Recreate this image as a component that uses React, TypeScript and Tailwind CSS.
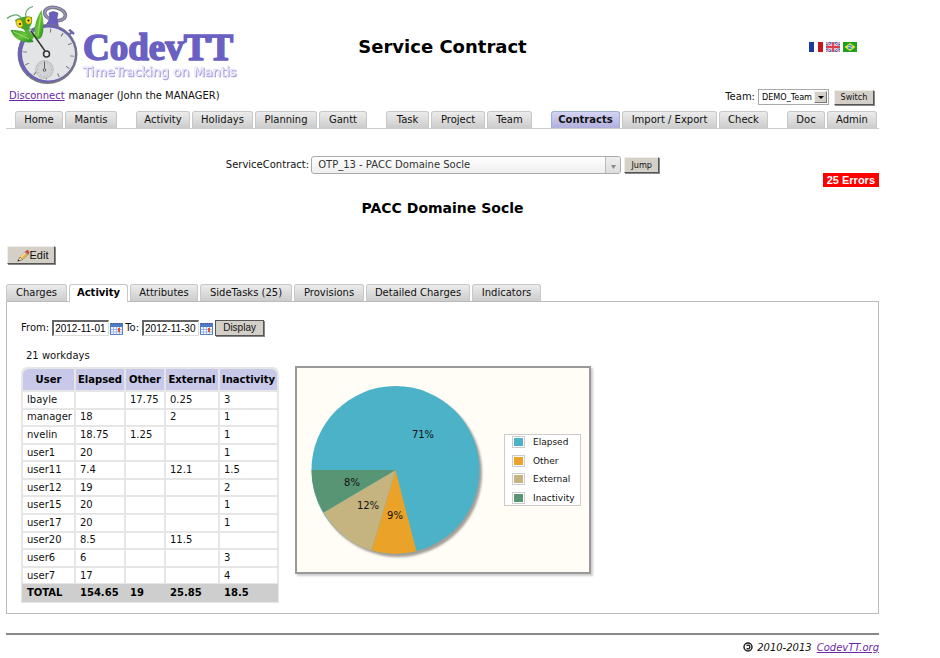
import React from "react";

const rows = [
  ["lbayle", "", "17.75", "0.25", "3"],
  ["manager", "18", "", "2", "1"],
  ["nvelin", "18.75", "1.25", "", "1"],
  ["user1", "20", "", "", "1"],
  ["user11", "7.4", "", "12.1", "1.5"],
  ["user12", "19", "", "", "2"],
  ["user15", "20", "", "", "1"],
  ["user17", "20", "", "", "1"],
  ["user20", "8.5", "", "11.5", ""],
  ["user6", "6", "", "", "3"],
  ["user7", "17", "", "", "4"],
];

const totals = ["TOTAL", "154.65", "19", "25.85", "18.5"];

const columns = [
  { label: "User", style: "w-[51px] rounded-tl-md" },
  { label: "Elapsed", style: "w-[48px]" },
  { label: "Other", style: "w-[38px]" },
  { label: "External", style: "w-[52px]" },
  { label: "Inactivity", style: "w-[57px] rounded-tr-md" },
];

const menu = [
  [
    { label: "Home", width: "w-[48px]" },
    { label: "Mantis", width: "w-[52px]" },
  ],
  [
    { label: "Activity", width: "w-[54px]" },
    { label: "Holidays", width: "w-[61px]" },
    { label: "Planning", width: "w-[62px]" },
    { label: "Gantt", width: "w-[48px]" },
  ],
  [
    { label: "Task", width: "w-[43px]" },
    { label: "Project", width: "w-[54px]" },
    { label: "Team", width: "w-[45px]" },
  ],
  [
    { label: "Contracts", width: "w-[69px]" },
    { label: "Import / Export", width: "w-[95px]" },
    { label: "Check", width: "w-[49px]" },
  ],
  [
    { label: "Doc", width: "w-[38px]" },
    { label: "Admin", width: "w-[50px]" },
  ],
];

const tabs = [
  { label: "Charges", width: "w-[61px]" },
  { label: "Activity", width: "w-[59px]" },
  { label: "Attributes", width: "w-[68px]" },
  { label: "SideTasks (25)", width: "w-[92px]" },
  { label: "Provisions", width: "w-[70px]" },
  { label: "Detailed Charges", width: "w-[104px]" },
  { label: "Indicators", width: "w-[69px]" },
];

const legend = [
  { label: "Elapsed", color: "bg-[#4bb2c8]" },
  { label: "Other", color: "bg-[#eaa228]" },
  { label: "External", color: "bg-[#c5b47f]" },
  { label: "Inactivity", color: "bg-[#579575]" },
];

const tabBase =
  "shrink-0 rounded-t-[3px] border border-b-0 text-center text-[10px] leading-4 whitespace-nowrap";
const tabIdle = "h-[17px] border-[#c8c8c8] bg-linear-to-b from-[#ececec] to-[#cccccc]";
const buttonBase =
  "border border-t-[#f0eee8] border-l-[#f0eee8] border-r-[#555] border-b-[#555] bg-[#d4d0c8] shadow-[1px_1px_0_#888]";
const smallFont = "font-['DejaVu_Sans_Condensed','DejaVu_Sans',sans-serif] text-[9px]";
const arialFont = "font-['Liberation_Sans',Arial,sans-serif]";

function Logo() {
  const ticks = Array.from({ length: 12 }, (_, i) => i * 30);
  return (
    <svg viewBox="6 0 234 86" className="h-[86px] w-[234px]" role="img" aria-label="CodevTT TimeTracking on Mantis">
      <defs>
        <linearGradient id="wing" x1="0" y1="0" x2="1" y2="1">
          <stop offset="0" stopColor="#2f9a2c" />
          <stop offset="0.5" stopColor="#6cc53c" />
          <stop offset="1" stopColor="#1a8420" />
        </linearGradient>
      </defs>
      <ellipse cx="55" cy="14" rx="10.5" ry="6.5" transform="rotate(12 55 14)" fill="none" stroke="#77777f" strokeWidth="3.6" />
      <ellipse cx="55" cy="14" rx="10.5" ry="6.5" transform="rotate(12 55 14)" fill="none" stroke="#9a96c8" strokeWidth="1.4" />
      <path d="M49 13 q4 -3 9 0 l-1 5 l1.5 9 l-12 -3 l3.5 -5 z" fill="#6a5fc0" stroke="#55518a" strokeWidth="0.6" />
      <path d="M68 35 l2.5 -3 l-2 -1.5 l1.5 -1.5 l4.5 4 l-1 1.5 l-2 -1 l-2 3 z" fill="#6a5fc0" stroke="#666" strokeWidth="0.4" />
      <circle cx="47.5" cy="54" r="30" fill="#77777f" />
      <circle cx="47" cy="53.5" r="28.8" fill="#6a62b6" />
      <circle cx="48.5" cy="54" r="26.5" fill="#e2e4e5" />
      {ticks.map((a) => (
        <line key={a} x1="48.5" y1="28.5" x2="48.5" y2="32.5" stroke="#777" strokeWidth="1" transform={`rotate(${a + 5} 48.5 54)`} />
      ))}
      <circle cx="44.5" cy="69.5" r="8.8" fill="#d3d4d5" stroke="#b2b2b4" strokeWidth="0.8" />
      <circle cx="44.5" cy="69.5" r="6.8" fill="none" stroke="#999" strokeWidth="1" strokeDasharray="0.7 2.8" />
      <path d="M44.5 61.5 v7" stroke="#555" strokeWidth="0.9" />
      <circle cx="44.5" cy="70" r="1.3" fill="#ddd" stroke="#555" strokeWidth="1" />
      <path d="M10.5 30 C17 30 27 31 30 35 L33.5 42 C28 43 22 42 17 39 C13 36 12 33 10.5 30 z" fill="url(#wing)" />
      <path d="M35 38 C33 27 37 17 41.5 10 C43.5 20 44.5 29 42 36 C40 40 37 40 35 38 z" fill="url(#wing)" />
      <path d="M13 31.5 L29 39" stroke="#b6e56c" strokeWidth="0.8" />
      <path d="M40.5 15 L38 36" stroke="#b6e56c" strokeWidth="0.8" />
      <path d="M23 27 C29 26 33 29 34.5 36 L32 40 C28 37 25 33 23 27 z" fill="#54b52e" />
      <path d="M15 20 Q24 15 32 17 Q33.5 24 27 30.5 Q18 29 15 20 z" fill="#43a42e" />
      <path d="M22 19 Q17 11 7 18.5 M26 17.5 Q24 9 33 6.5" fill="none" stroke="#5fa56c" strokeWidth="1.2" />
      <ellipse cx="19.5" cy="23.5" rx="3.2" ry="4.2" fill="#f7dc16" stroke="#917b12" strokeWidth="0.6" transform="rotate(-20 19.5 23.5)" />
      <ellipse cx="28.5" cy="20.5" rx="3.2" ry="3.8" fill="#f7dc16" stroke="#917b12" strokeWidth="0.6" />
      <circle cx="20" cy="24" r="1.1" fill="#222" />
      <circle cx="28.5" cy="20.5" r="1.1" fill="#222" />
      <path d="M29.5 29.5 L33 34" stroke="#b9b4e8" strokeWidth="2.5" />
      <path d="M31 31 L45 51" stroke="#333" strokeWidth="1.4" />
      <circle cx="46.5" cy="54" r="3" fill="#e8e8e8" stroke="#333" strokeWidth="1.5" />
      <text x="83" y="60" fontSize="37" fontWeight="700" fill="#6960c2" stroke="#6960c2" strokeWidth="1.6" fontFamily="'Liberation Serif','Times New Roman',serif">CodevTT</text>
      <text
        x="83"
        y="76"
        fontSize="13"
        fill="#ffffff"
        stroke="#d5d1f2"
        strokeWidth="0.4"
        fontFamily="'DejaVu Sans',sans-serif"
        className="[filter:drop-shadow(1px_1px_0_#a49dde)]"
      >
        TimeTracking on Mantis
      </text>
    </svg>
  );
}

function CalendarIcon() {
  return (
    <svg viewBox="0 0 13 13" className="block h-[13px] w-[13px]" aria-hidden="true">
      <rect x="0.5" y="1.5" width="12" height="11" fill="#f2f6ff" stroke="#5b82c8" />
      <rect x="0" y="1" width="13" height="4" fill="#4d7bcc" />
      <path d="M1 1.5 h11" stroke="#556" strokeDasharray="1 1" />
      <path d="M1 7.5 h11 M1 10 h11 M3.5 5 v7 M6.5 5 v7 M9.5 5 v7" stroke="#8facde" strokeWidth="0.8" />
      <rect x="8" y="6" width="2" height="4" fill="#e0502c" />
    </svg>
  );
}

function PencilIcon() {
  return (
    <svg viewBox="0 0 13 13" className="h-[13px] w-[13px]" aria-hidden="true">
      <path d="M1 12 L3 8 L9 2 L12 5 L5.5 10.5 z" fill="#f3b83b" stroke="#8b6a35" strokeWidth="0.5" />
      <path d="M3 8 L8.5 2.5 L9.5 3.5 L4 9 z" fill="#fbe09a" />
      <path d="M8 3 L10 1 Q12 1 12.5 3.5 L10.5 5.5 z" fill="#d9412b" />
      <path d="M7.5 3.5 L8.5 2.5 L11 5 L10 6 z" fill="#8aa0cc" />
      <path d="M1 12 L3 8 L5.5 10.5 z" fill="#f5e6d0" stroke="#555" strokeWidth="0.5" />
      <path d="M0.5 12.5 L1.5 10.5 L2.8 11.6 z" fill="#222" />
    </svg>
  );
}

function Flags() {
  return (
    <div className="flex gap-[3px]">
      <button type="button" aria-label="Français">
        <svg viewBox="0 0 14 10" className="block h-[10px] w-[14px]">
          <rect width="14" height="10" fill="#fff" />
          <rect width="5" height="10" fill="#1a3a9c" />
          <rect x="9" width="5" height="10" fill="#c8161d" />
        </svg>
      </button>
      <button type="button" aria-label="English">
        <svg viewBox="0 0 14 10" className="block h-[10px] w-[14px]">
          <rect width="14" height="10" fill="#5068b4" />
          <path d="M0 0 L14 10 M14 0 L0 10" stroke="#e4e4f2" strokeWidth="2.2" />
          <path d="M0 0 L14 10 M14 0 L0 10" stroke="#d86070" strokeWidth="1" />
          <path d="M7 0 V10 M0 5 H14" stroke="#f6dfe4" strokeWidth="3" />
          <path d="M7 0 V10 M0 5 H14" stroke="#d8404f" strokeWidth="1.8" />
        </svg>
      </button>
      <button type="button" aria-label="Português">
        <svg viewBox="0 0 14 10" className="block h-[10px] w-[14px]">
          <rect width="14" height="10" fill="#1fa01f" />
          <path d="M7 1 L12.5 5 L7 9 L1.5 5 z" fill="#e6e63a" />
          <circle cx="7" cy="5" r="2.3" fill="#3f96b8" />
          <path d="M5 4.5 Q7 4 9 5.8" stroke="#fff" strokeWidth="0.6" fill="none" />
        </svg>
      </button>
    </div>
  );
}

function PieChart() {
  return (
    <div className="flex h-[208px] w-[296px] shrink-0 items-center border-2 border-[#999] bg-[#fffdf6] shadow-[2px_2px_2px_#ccc]">
      <svg viewBox="0 0 200 204" className="h-[204px] w-[200px] shrink-0" role="img" aria-label="Activity share">
        <defs>
          <filter id="pieShade" x="-10%" y="-10%" width="120%" height="120%">
            <feGaussianBlur stdDeviation="1.2" />
          </filter>
        </defs>
        <circle cx="101" cy="105" r="84" fill="#8d8780" opacity="0.8" filter="url(#pieShade)" />
        <circle cx="98.5" cy="102" r="84" fill="#4bb2c8" />
        <path d="M98.5 102 L119.5 183.3 A84 84 0 0 1 74.5 182.5 z" fill="#eaa228" />
        <path d="M98.5 102 L74.5 182.5 A84 84 0 0 1 26.5 144.5 z" fill="#c5b47f" />
        <path d="M98.5 102 L26.5 144.5 A84 84 0 0 1 14.5 102 z" fill="#579575" />
        <g fontSize="10" fontFamily="'DejaVu Sans',sans-serif" textAnchor="middle" fill="#111">
          <text x="126" y="70">71%</text>
          <text x="55" y="118">8%</text>
          <text x="71" y="141">12%</text>
          <text x="98" y="151">9%</text>
        </g>
      </svg>
      <ul className="ml-[7px] flex h-[72px] w-[77px] flex-col justify-between border border-[#ccc] bg-white py-px pl-[7px] text-[9px] leading-3">
        {legend.map((item) => (
          <li key={item.label} className="flex items-center gap-2">
            <span className="border border-[#ccc] p-px">
              <span className={`block h-[8px] w-[9px] ${item.color}`} />
            </span>
            {item.label}
          </li>
        ))}
      </ul>
    </div>
  );
}

function DateField({ id, label, value }: { id: string; label: string; value: string }) {
  return (
    <>
      <label htmlFor={id} className="mr-[3px]">{label}</label>
      <input
        id={id}
        type="text"
        defaultValue={value}
        className={`h-[16px] w-[57px] border border-t-2 border-l-2 border-[#ddd] border-t-[#666] border-l-[#666] bg-white pl-px text-[10px] text-black ${arialFont}`}
      />
      <button type="button" aria-label={`Pick date, ${label}`} className="mr-[2px] ml-px">
        <CalendarIcon />
      </button>
    </>
  );
}

export default function App() {
  return (
    <div className="mr-[61px] ml-[6px] font-['DejaVu_Sans',sans-serif] text-[10px] leading-3 text-[#111]">
      <header>
        <div className="grid grid-cols-[1fr_auto_1fr] items-center">
          <Logo />
          <h1 className="pt-2 text-[18px] leading-6 font-bold text-black">Service Contract</h1>
          <div className="flex justify-end pt-2 pr-[22px]">
            <Flags />
          </div>
        </div>
        <div className="flex h-[20px] items-center justify-between pr-[5px]">
          <p className="pl-[3px]">
            <a href="#disconnect" className="mr-1 text-[#6a2aa8] underline">Disconnect</a>
            manager (John the MANAGER)
          </p>
          <form className="flex items-center pt-[2px]">
            <label htmlFor="team" className="mr-[3px]">Team:</label>
            <div className="relative">
              <select
                id="team"
                className={`block h-[16px] w-[71px] appearance-none border border-[#ccc] border-t-[#444] border-l-[#444] bg-white pl-[3px] text-black outline outline-[#aaa] -outline-offset-1 ${smallFont}`}
              >
                <option>DEMO_Team</option>
              </select>
              <span className="pointer-events-none absolute top-[2px] right-[2px] flex h-[12px] w-[13px] items-center justify-center border border-[#f4f2ee] border-r-[#777] border-b-[#777] bg-[#d4d0c8]">
                <svg viewBox="0 0 6 3" className="h-[3px] w-[6px]" aria-hidden="true">
                  <path d="M0 0 H6 L3 3 z" fill="#000" />
                </svg>
              </span>
            </div>
            <button type="button" className={`ml-[5px] h-[15px] w-[40px] ${smallFont} ${buttonBase}`}>Switch</button>
          </form>
        </div>
        <nav className="mt-[5px] flex gap-[19px] border-b border-[#ccc] pl-[9px]">
          {menu.map((group) => (
            <div key={group[0].label} className="flex gap-[2px]">
              {group.map((item) => (
                <a
                  key={item.label}
                  href="#menu"
                  className={`${tabBase} ${item.width} ${item.label === "Contracts" ? "h-[17px] border-[#9db0d4] bg-linear-to-b from-[#d4d4f4] to-[#b0b0dc] font-bold" : tabIdle}`}
                >
                  {item.label}
                </a>
              ))}
            </div>
          ))}
        </nav>
      </header>

      <main>
        <form className="mt-[27px] flex items-center justify-center">
          <label htmlFor="contract" className="mr-[2px]">ServiceContract:</label>
          <div className="relative">
            <select
              id="contract"
              className="block h-[18px] w-[310px] appearance-none rounded-[3px] border border-[#aaa] bg-linear-to-b from-white to-[#eee] pl-[6px] text-[10px] text-[#333]"
            >
              <option>OTP_13 - PACC Domaine Socle</option>
            </select>
            <span className="pointer-events-none absolute top-px right-px flex h-[16px] w-[15px] items-center justify-center rounded-r-[2px] border-l border-[#bbb] bg-linear-to-b from-[#eee] to-[#ddd] pt-1">
              <svg viewBox="0 0 5 4" className="h-[4px] w-[5px]" aria-hidden="true">
                <path d="M0 0 H5 L2.5 4 z" fill="#888" />
              </svg>
            </span>
          </div>
          <button type="button" className={`ml-[3px] h-[16px] w-[35px] ${smallFont} ${buttonBase}`}>Jump</button>
        </form>
        <div className="-mt-px flex justify-end">
          <strong className={`bg-[#ff0000] px-1 text-[11px] leading-[14px] text-white ${arialFont}`}>25 Errors</strong>
        </div>
        <h2 className="mt-[11px] text-center text-[14px] leading-5 font-bold text-black">PACC Domaine Socle</h2>

        <button type="button" className={`mt-[28px] ml-px flex h-[18px] w-[48px] items-center justify-center pl-[3px] text-[11px] ${arialFont} ${buttonBase}`}>
          <PencilIcon />
          Edit
        </button>

        <div role="tablist" className="mt-5 flex gap-[2px]">
          {tabs.map((tab) => (
            <button
              key={tab.label}
              type="button"
              role="tab"
              aria-selected={tab.label === "Activity"}
              className={`${tabBase} ${tab.width} ${tab.label === "Activity" ? "-mb-px h-[18px] border-[#c8c8c8] bg-white pb-px font-bold text-black" : tabIdle}`}
            >
              {tab.label}
            </button>
          ))}
        </div>

        <section className="border border-[#bbb] px-[14px] pt-[18px] pb-[10px]">
          <form className="flex items-center">
            <DateField id="from" label="From:" value="2012-11-01" />
            <DateField id="to" label="To:" value="2012-11-30" />
            <button type="button" className={`h-[16px] w-[49px] text-[10px] outline outline-[#555] -outline-offset-1 ${arialFont} ${buttonBase}`}>Display</button>
          </form>
          <p className="mt-[14px] pl-[5px]">21 workdays</p>
          <div className="mt-1 flex items-start gap-4">
            <table className="mt-px h-[236px] w-[258px] table-fixed border-separate border-spacing-[2px] rounded-t-md bg-[#e6e6e6] leading-3">
              <thead>
                <tr className="h-[21px]">
                  {columns.map((c) => (
                    <th key={c.label} className={`bg-[#c8c8e8] p-0 text-center font-bold text-black ${c.style}`}>{c.label}</th>
                  ))}
                </tr>
              </thead>
              <tbody>
                {rows.map((row) => (
                  <tr key={row[0]}>
                    {row.map((cell, i) => (
                      <td key={i} className="bg-white px-1 py-0">{cell}</td>
                    ))}
                  </tr>
                ))}
                <tr>
                  {totals.map((cell) => (
                    <td key={cell} className="bg-[#cecece] px-1 py-0 font-bold text-black shadow-[0_0_0_1px_#cecece]">{cell}</td>
                  ))}
                </tr>
              </tbody>
            </table>
            <PieChart />
          </div>
        </section>
      </main>

      <footer className="mt-[19px] flex items-start justify-end border-t-2 border-[#888] pt-[7px] italic">
        <svg viewBox="0 0 10 10" className="mr-1 h-[10px] w-[10px]" role="img" aria-label="Copyleft">
          <circle cx="5" cy="5" r="4" fill="#fff" stroke="#222" strokeWidth="1.5" />
          <path d="M3.5 3.5 Q6.8 2.2 6.8 5 Q6.8 7.8 3.5 6.5" fill="none" stroke="#222" strokeWidth="1.4" />
        </svg>
        <span className="mr-[5px]">2010-2013</span>
        <a href="#codevtt" className="text-[#6a2aa8] underline">CodevTT.org</a>
      </footer>
    </div>
  );
}
